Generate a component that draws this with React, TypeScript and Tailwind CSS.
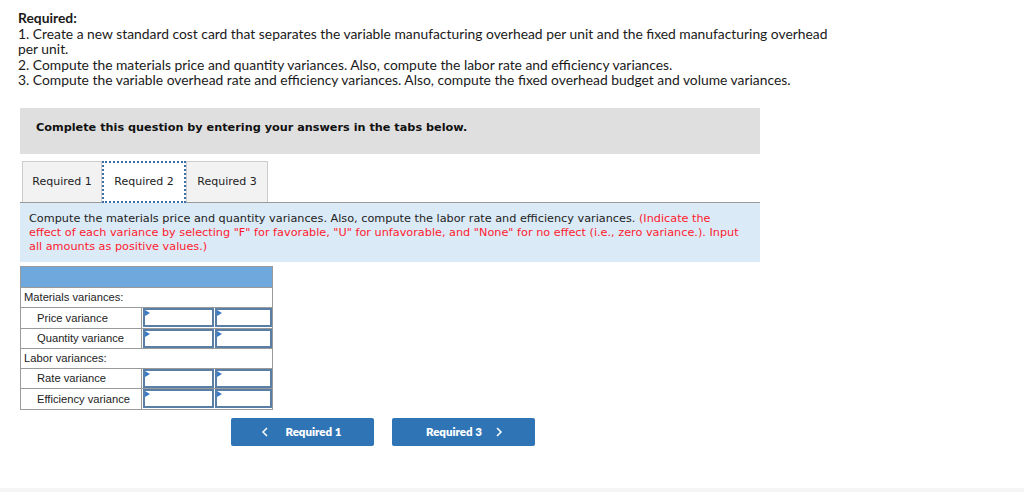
import React from "react";

const Tri = () => (
  <svg className="absolute left-0 top-0" width="5" height="6" viewBox="0 0 5 6">
    <polygon points="0,0 5,3 0,6" fill="#3a7bc8" />
  </svg>
);

const InputCell = ({ w }: { w: string }) => (
  <div className={`relative ${w} h-[19px] border-2 border-[#5a7fa6] bg-white`}>
    <Tri />
  </div>
);

const SubRow = ({ label, last, h = "h-[20px]" }: { label: string; last?: boolean; h?: string }) => (
  <div className={`flex ${h} ${last ? "" : "border-b border-[#9a9a9a]"}`}>
    <div className="w-[122px] border-r border-[#9a9a9a] pl-[16px] pt-[1px] flex items-center text-[11.2px] text-[#222]">
      {label}
    </div>
    <div className="flex items-center gap-[1px] pl-[1px]">
      <InputCell w="w-[71px]" />
      <InputCell w="w-[57px]" />
    </div>
  </div>
);

export default function App() {
  return (
    <div className="w-[1024px] h-[492px] bg-white relative overflow-hidden" style={{ fontFamily: "Lato, 'Liberation Sans', sans-serif" }}>
      <div className="pl-[18px] pt-[10px] text-[13.85px] leading-[15.5px] text-[#1a1a1a] w-[860px]">
        <div className="font-bold">Required:</div>
        <div>1. Create a new standard cost card that separates the variable manufacturing overhead per unit and the fixed manufacturing overhead<br />per unit.</div>
        <div>2. Compute the materials price and quantity variances. Also, compute the labor rate and efficiency variances.</div>
        <div>3. Compute the variable overhead rate and efficiency variances. Also, compute the fixed overhead budget and volume variances.</div>
      </div>

      <div className="ml-[20px] mt-[20px] w-[740px]" style={{ fontFamily: "'DejaVu Sans', Verdana, sans-serif" }}>
        <div className="h-[46px] bg-[#dfdfdf] pt-[12px] pl-[16px] text-[11.25px] font-bold text-[#111]">
          Complete this question by entering your answers in the tabs below.
        </div>

        <div className="mt-[7px] flex pl-[2px] h-[42px] border-b border-[#9a9a9a] text-[11px] text-[#222]">
          <div className="w-[80px] bg-[#f2f2f2] border border-[#cccccc] border-b-0 flex items-center justify-center pt-[2px]">Required 1</div>
          <div className="w-[84px] bg-white border-2 border-dotted border-[#3a6ea5] -mb-[1px] flex items-center justify-center pt-[2px]">Required 2</div>
          <div className="w-[82px] bg-[#f2f2f2] border border-[#cccccc] border-b-0 flex items-center justify-center pt-[2px]">Required 3</div>
        </div>

        <div className="bg-[#dbeaf7] h-[59px] pl-[9px] pr-[4px] pt-[9px] text-[11.25px] leading-[14px] text-[#222] whitespace-nowrap">
          <div>
            Compute the materials price and quantity variances. Also, compute the labor rate and efficiency variances.{" "}
            <span className="text-[#ff1a2e]">(Indicate the</span>
          </div>
          <div className="text-[#ff1a2e]">
            effect of each variance by selecting "F" for favorable, "U" for unfavorable, and "None" for no effect (i.e., zero variance.). Input
          </div>
          <div className="text-[#ff1a2e]">all amounts as positive values.)</div>
        </div>
      </div>

      <div className="ml-[20px] mt-[4px] w-[253px] border border-[#9a9a9a]" style={{ fontFamily: "'Liberation Sans', Arial, sans-serif" }}>
        <div className="h-[21px] bg-[#6fa8dc] border-b border-[#9a9a9a]" />
        <div className="h-[20px] border-b border-[#9a9a9a] pl-[3px] pt-[1px] flex items-center text-[11.2px] text-[#222]">Materials variances:</div>
        <SubRow label="Price variance" h="h-[21px]" />
        <SubRow label="Quantity variance" />
        <div className="h-[20px] border-b border-[#9a9a9a] pl-[3px] pt-[1px] flex items-center text-[11.2px] text-[#222]">Labor variances:</div>
        <SubRow label="Rate variance" />
        <SubRow label="Efficiency variance" last />
      </div>

      <div className="ml-[231px] mt-[8px] flex gap-[18px] text-white text-[11.5px] font-extrabold" style={{ fontFamily: "Lato, 'Liberation Sans', sans-serif" }}>
        <div className="w-[143px] h-[28px] bg-[#2f74b5] rounded-[2px] flex items-center justify-center gap-[16px] pr-[2px]">
          <svg width="8" height="10" viewBox="0 0 8 10"><polyline points="6,1 2,5 6,9" fill="none" stroke="white" strokeWidth="1.5" /></svg>
          <span>Required 1</span>
        </div>
        <div className="w-[143px] h-[28px] bg-[#2f74b5] rounded-[2px] flex items-center justify-center gap-[13px] pl-[2px]">
          <span>Required 3</span>
          <svg width="8" height="10" viewBox="0 0 8 10"><polyline points="2,1 6,5 2,9" fill="none" stroke="white" strokeWidth="1.5" /></svg>
        </div>
      </div>

      <div className="absolute left-0 right-0 bottom-0 h-[4px] bg-[#f5f5f5]" />
    </div>
  );
}
